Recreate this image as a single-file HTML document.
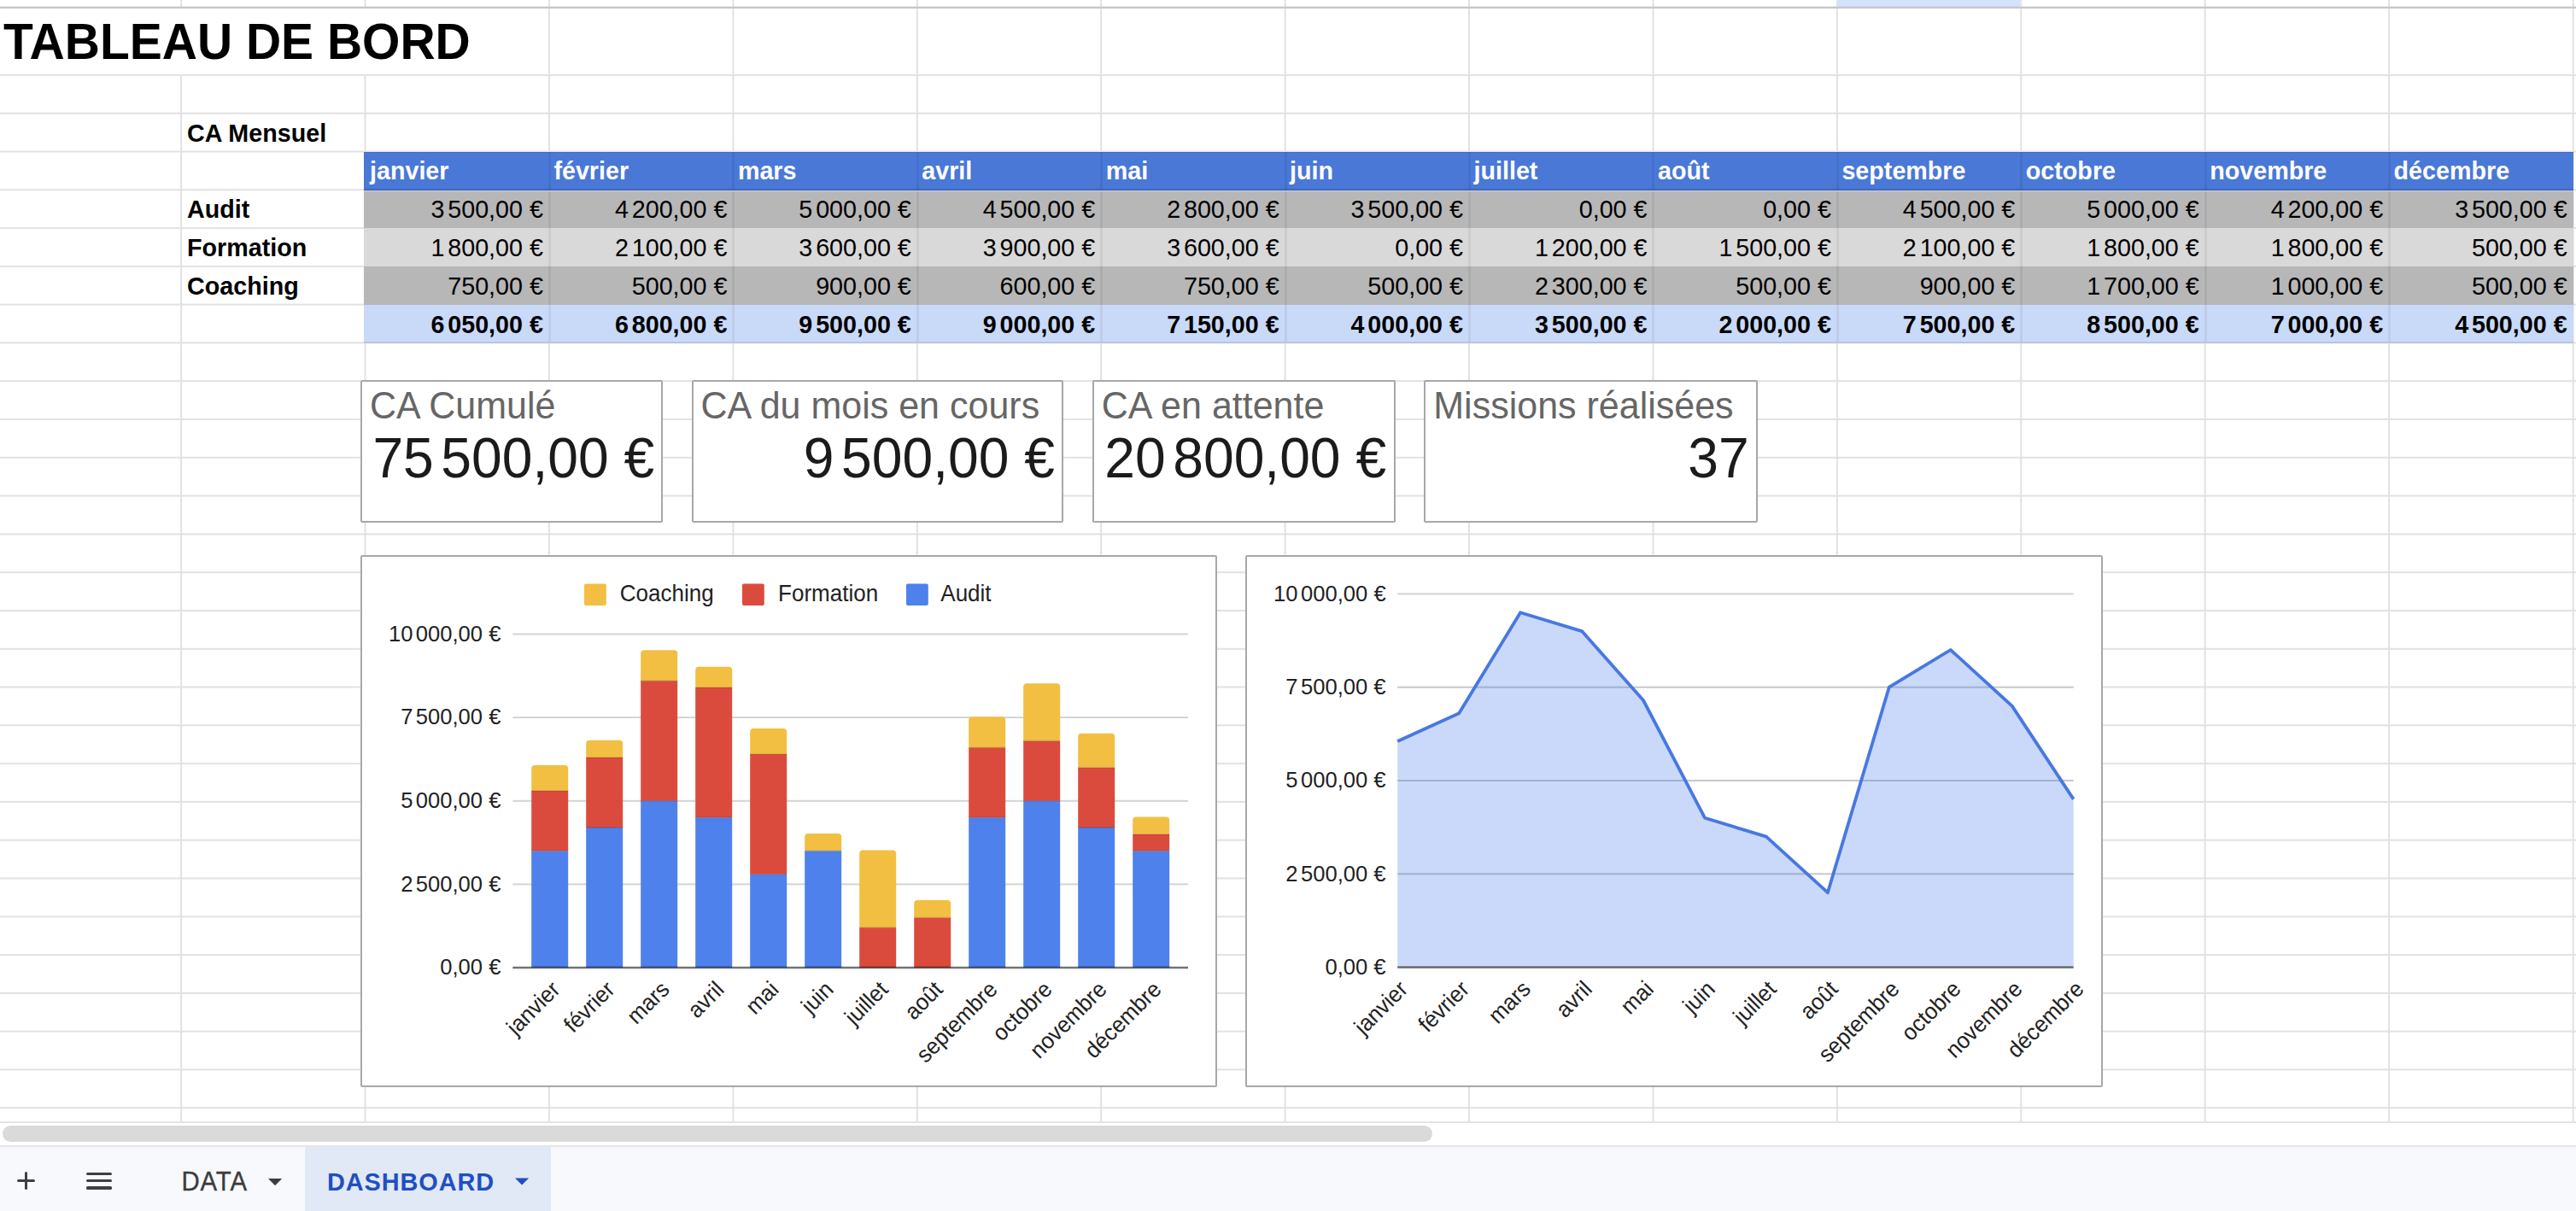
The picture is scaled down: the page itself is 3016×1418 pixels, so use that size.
<!DOCTYPE html>
<html><head><meta charset="utf-8">
<style>
html,body{margin:0;padding:0;}
body{width:3016px;height:1418px;overflow:hidden;background:#fff;position:relative;font-family:"Liberation Sans",sans-serif;}
.a{position:absolute;}
.t{position:absolute;white-space:nowrap;line-height:1;transform:scaleY(1.035);transform-origin:0 0.8465em;}
</style></head><body>

<svg class="a" style="left:0;top:0" width="3016" height="1316" viewBox="0 0 3016 1316">
<rect x="2151.9" y="0" width="213.4" height="8" fill="#d3e3fd"/>
<rect x="211.1" y="0" width="2" height="9" fill="#e2e2e2"/>
<rect x="211.1" y="87.9" width="2" height="1226.1" fill="#e2e2e2"/>
<rect x="426.5" y="0" width="2" height="9" fill="#e2e2e2"/>
<rect x="426.5" y="87.9" width="2" height="1226.1" fill="#e2e2e2"/>
<rect x="641.9" y="0" width="2" height="1314" fill="#e2e2e2"/>
<rect x="857.4" y="0" width="2" height="1314" fill="#e2e2e2"/>
<rect x="1072.8" y="0" width="2" height="1314" fill="#e2e2e2"/>
<rect x="1288.2" y="0" width="2" height="1314" fill="#e2e2e2"/>
<rect x="1503.6" y="0" width="2" height="1314" fill="#e2e2e2"/>
<rect x="1719.0" y="0" width="2" height="1314" fill="#e2e2e2"/>
<rect x="1934.5" y="0" width="2" height="1314" fill="#e2e2e2"/>
<rect x="2149.9" y="0" width="2" height="1314" fill="#e2e2e2"/>
<rect x="2365.3" y="0" width="2" height="1314" fill="#e2e2e2"/>
<rect x="2580.7" y="0" width="2" height="1314" fill="#e2e2e2"/>
<rect x="2796.1" y="0" width="2" height="1314" fill="#e2e2e2"/>
<rect x="3011.6" y="0" width="2" height="1314" fill="#e2e2e2"/>
<rect x="0" y="86.9" width="3016" height="2" fill="#e2e2e2"/>
<rect x="0" y="131.7" width="3016" height="2" fill="#e2e2e2"/>
<rect x="0" y="176.5" width="3016" height="2" fill="#e2e2e2"/>
<rect x="0" y="221.3" width="3016" height="2" fill="#e2e2e2"/>
<rect x="0" y="266.1" width="3016" height="2" fill="#e2e2e2"/>
<rect x="0" y="310.9" width="3016" height="2" fill="#e2e2e2"/>
<rect x="0" y="355.6" width="3016" height="2" fill="#e2e2e2"/>
<rect x="0" y="400.4" width="3016" height="2" fill="#e2e2e2"/>
<rect x="0" y="445.2" width="3016" height="2" fill="#e2e2e2"/>
<rect x="0" y="490.0" width="3016" height="2" fill="#e2e2e2"/>
<rect x="0" y="534.8" width="3016" height="2" fill="#e2e2e2"/>
<rect x="0" y="579.6" width="3016" height="2" fill="#e2e2e2"/>
<rect x="0" y="624.4" width="3016" height="2" fill="#e2e2e2"/>
<rect x="0" y="669.2" width="3016" height="2" fill="#e2e2e2"/>
<rect x="0" y="714.0" width="3016" height="2" fill="#e2e2e2"/>
<rect x="0" y="758.8" width="3016" height="2" fill="#e2e2e2"/>
<rect x="0" y="803.5" width="3016" height="2" fill="#e2e2e2"/>
<rect x="0" y="848.3" width="3016" height="2" fill="#e2e2e2"/>
<rect x="0" y="893.1" width="3016" height="2" fill="#e2e2e2"/>
<rect x="0" y="937.9" width="3016" height="2" fill="#e2e2e2"/>
<rect x="0" y="982.7" width="3016" height="2" fill="#e2e2e2"/>
<rect x="0" y="1027.5" width="3016" height="2" fill="#e2e2e2"/>
<rect x="0" y="1072.3" width="3016" height="2" fill="#e2e2e2"/>
<rect x="0" y="1117.1" width="3016" height="2" fill="#e2e2e2"/>
<rect x="0" y="1161.9" width="3016" height="2" fill="#e2e2e2"/>
<rect x="0" y="1206.7" width="3016" height="2" fill="#e2e2e2"/>
<rect x="0" y="1251.4" width="3016" height="2" fill="#e2e2e2"/>
<rect x="0" y="1296.2" width="3016" height="2" fill="#e2e2e2"/>
<rect x="0" y="7.6" width="3016" height="2.4" fill="#c7c9c9"/>
<rect x="0" y="1313.2" width="3016" height="2.2" fill="#e0e0e0"/>
</svg>
<div class="t" style="left:4px;top:21.1px;font-size:57px;font-weight:bold;color:#000">TABLEAU DE BORD</div>
<div class="t" style="left:219.0px;top:141.6px;font-size:28.7px;font-weight:bold;color:#000">CA Mensuel</div>
<div class="t" style="left:219.0px;top:231.2px;font-size:28.7px;font-weight:bold;color:#000">Audit</div>
<div class="t" style="left:219.0px;top:276.0px;font-size:28.7px;font-weight:bold;color:#000">Formation</div>
<div class="t" style="left:219.0px;top:320.7px;font-size:28.7px;font-weight:bold;color:#000">Coaching</div>
<div class="a" style="left:426px;top:178px;width:2587px;height:45px;background:#4a78d7"></div>
<div class="a" style="left:642px;top:178px;width:3px;height:45px;background:rgba(0,0,0,0.06)"></div>
<div class="a" style="left:857px;top:178px;width:3px;height:45px;background:rgba(0,0,0,0.06)"></div>
<div class="a" style="left:1073px;top:178px;width:3px;height:45px;background:rgba(0,0,0,0.06)"></div>
<div class="a" style="left:1288px;top:178px;width:3px;height:45px;background:rgba(0,0,0,0.06)"></div>
<div class="a" style="left:1504px;top:178px;width:3px;height:45px;background:rgba(0,0,0,0.06)"></div>
<div class="a" style="left:1719px;top:178px;width:3px;height:45px;background:rgba(0,0,0,0.06)"></div>
<div class="a" style="left:1934px;top:178px;width:3px;height:45px;background:rgba(0,0,0,0.06)"></div>
<div class="a" style="left:2150px;top:178px;width:3px;height:45px;background:rgba(0,0,0,0.06)"></div>
<div class="a" style="left:2365px;top:178px;width:3px;height:45px;background:rgba(0,0,0,0.06)"></div>
<div class="a" style="left:2581px;top:178px;width:3px;height:45px;background:rgba(0,0,0,0.06)"></div>
<div class="a" style="left:2796px;top:178px;width:3px;height:45px;background:rgba(0,0,0,0.06)"></div>
<div class="a" style="left:426px;top:225px;width:2587px;height:42px;background:#b7b7b7"></div>
<div class="a" style="left:642px;top:225px;width:3px;height:42px;background:rgba(0,0,0,0.06)"></div>
<div class="a" style="left:857px;top:225px;width:3px;height:42px;background:rgba(0,0,0,0.06)"></div>
<div class="a" style="left:1073px;top:225px;width:3px;height:42px;background:rgba(0,0,0,0.06)"></div>
<div class="a" style="left:1288px;top:225px;width:3px;height:42px;background:rgba(0,0,0,0.06)"></div>
<div class="a" style="left:1504px;top:225px;width:3px;height:42px;background:rgba(0,0,0,0.06)"></div>
<div class="a" style="left:1719px;top:225px;width:3px;height:42px;background:rgba(0,0,0,0.06)"></div>
<div class="a" style="left:1934px;top:225px;width:3px;height:42px;background:rgba(0,0,0,0.06)"></div>
<div class="a" style="left:2150px;top:225px;width:3px;height:42px;background:rgba(0,0,0,0.06)"></div>
<div class="a" style="left:2365px;top:225px;width:3px;height:42px;background:rgba(0,0,0,0.06)"></div>
<div class="a" style="left:2581px;top:225px;width:3px;height:42px;background:rgba(0,0,0,0.06)"></div>
<div class="a" style="left:2796px;top:225px;width:3px;height:42px;background:rgba(0,0,0,0.06)"></div>
<div class="a" style="left:426px;top:267px;width:2587px;height:45px;background:#d9d9d9"></div>
<div class="a" style="left:642px;top:267px;width:3px;height:45px;background:rgba(0,0,0,0.06)"></div>
<div class="a" style="left:857px;top:267px;width:3px;height:45px;background:rgba(0,0,0,0.06)"></div>
<div class="a" style="left:1073px;top:267px;width:3px;height:45px;background:rgba(0,0,0,0.06)"></div>
<div class="a" style="left:1288px;top:267px;width:3px;height:45px;background:rgba(0,0,0,0.06)"></div>
<div class="a" style="left:1504px;top:267px;width:3px;height:45px;background:rgba(0,0,0,0.06)"></div>
<div class="a" style="left:1719px;top:267px;width:3px;height:45px;background:rgba(0,0,0,0.06)"></div>
<div class="a" style="left:1934px;top:267px;width:3px;height:45px;background:rgba(0,0,0,0.06)"></div>
<div class="a" style="left:2150px;top:267px;width:3px;height:45px;background:rgba(0,0,0,0.06)"></div>
<div class="a" style="left:2365px;top:267px;width:3px;height:45px;background:rgba(0,0,0,0.06)"></div>
<div class="a" style="left:2581px;top:267px;width:3px;height:45px;background:rgba(0,0,0,0.06)"></div>
<div class="a" style="left:2796px;top:267px;width:3px;height:45px;background:rgba(0,0,0,0.06)"></div>
<div class="a" style="left:426px;top:312px;width:2587px;height:45px;background:#b7b7b7"></div>
<div class="a" style="left:642px;top:312px;width:3px;height:45px;background:rgba(0,0,0,0.06)"></div>
<div class="a" style="left:857px;top:312px;width:3px;height:45px;background:rgba(0,0,0,0.06)"></div>
<div class="a" style="left:1073px;top:312px;width:3px;height:45px;background:rgba(0,0,0,0.06)"></div>
<div class="a" style="left:1288px;top:312px;width:3px;height:45px;background:rgba(0,0,0,0.06)"></div>
<div class="a" style="left:1504px;top:312px;width:3px;height:45px;background:rgba(0,0,0,0.06)"></div>
<div class="a" style="left:1719px;top:312px;width:3px;height:45px;background:rgba(0,0,0,0.06)"></div>
<div class="a" style="left:1934px;top:312px;width:3px;height:45px;background:rgba(0,0,0,0.06)"></div>
<div class="a" style="left:2150px;top:312px;width:3px;height:45px;background:rgba(0,0,0,0.06)"></div>
<div class="a" style="left:2365px;top:312px;width:3px;height:45px;background:rgba(0,0,0,0.06)"></div>
<div class="a" style="left:2581px;top:312px;width:3px;height:45px;background:rgba(0,0,0,0.06)"></div>
<div class="a" style="left:2796px;top:312px;width:3px;height:45px;background:rgba(0,0,0,0.06)"></div>
<div class="a" style="left:426px;top:357px;width:2587px;height:43px;background:#c9daf8"></div>
<div class="a" style="left:642px;top:357px;width:3px;height:43px;background:rgba(0,0,0,0.06)"></div>
<div class="a" style="left:857px;top:357px;width:3px;height:43px;background:rgba(0,0,0,0.06)"></div>
<div class="a" style="left:1073px;top:357px;width:3px;height:43px;background:rgba(0,0,0,0.06)"></div>
<div class="a" style="left:1288px;top:357px;width:3px;height:43px;background:rgba(0,0,0,0.06)"></div>
<div class="a" style="left:1504px;top:357px;width:3px;height:43px;background:rgba(0,0,0,0.06)"></div>
<div class="a" style="left:1719px;top:357px;width:3px;height:43px;background:rgba(0,0,0,0.06)"></div>
<div class="a" style="left:1934px;top:357px;width:3px;height:43px;background:rgba(0,0,0,0.06)"></div>
<div class="a" style="left:2150px;top:357px;width:3px;height:43px;background:rgba(0,0,0,0.06)"></div>
<div class="a" style="left:2365px;top:357px;width:3px;height:43px;background:rgba(0,0,0,0.06)"></div>
<div class="a" style="left:2581px;top:357px;width:3px;height:43px;background:rgba(0,0,0,0.06)"></div>
<div class="a" style="left:2796px;top:357px;width:3px;height:43px;background:rgba(0,0,0,0.06)"></div>
<div class="a" style="left:426px;top:178px;width:2587px;height:1px;background:rgba(0,0,0,0.10)"></div>
<div class="a" style="left:426px;top:221px;width:2587px;height:2px;background:rgba(0,0,0,0.12)"></div>
<div class="a" style="left:426px;top:223px;width:2587px;height:2px;background:#bdc1cb"></div>
<div class="a" style="left:426px;top:400px;width:2587px;height:2px;background:#b8c6e3"></div>
<div class="t" style="left:433.0px;top:186.4px;font-size:28.7px;font-weight:bold;color:#fff">janvier</div>
<div class="t" style="left:648.4px;top:186.4px;font-size:28.7px;font-weight:bold;color:#fff">février</div>
<div class="t" style="left:863.9px;top:186.4px;font-size:28.7px;font-weight:bold;color:#fff">mars</div>
<div class="t" style="left:1079.3px;top:186.4px;font-size:28.7px;font-weight:bold;color:#fff">avril</div>
<div class="t" style="left:1294.7px;top:186.4px;font-size:28.7px;font-weight:bold;color:#fff">mai</div>
<div class="t" style="left:1510.1px;top:186.4px;font-size:28.7px;font-weight:bold;color:#fff">juin</div>
<div class="t" style="left:1725.5px;top:186.4px;font-size:28.7px;font-weight:bold;color:#fff">juillet</div>
<div class="t" style="left:1941.0px;top:186.4px;font-size:28.7px;font-weight:bold;color:#fff">août</div>
<div class="t" style="left:2156.4px;top:186.4px;font-size:28.7px;font-weight:bold;color:#fff">septembre</div>
<div class="t" style="left:2371.8px;top:186.4px;font-size:28.7px;font-weight:bold;color:#fff">octobre</div>
<div class="t" style="left:2587.2px;top:186.4px;font-size:28.7px;font-weight:bold;color:#fff">novembre</div>
<div class="t" style="left:2802.6px;top:186.4px;font-size:28.7px;font-weight:bold;color:#fff">décembre</div>
<div class="t" style="right:2380.1px;top:231.2px;font-size:28.7px;font-weight:normal;color:#000">3<span style="display:inline-block;width:0.133em"></span>500,00 €</div>
<div class="t" style="right:2164.6px;top:231.2px;font-size:28.7px;font-weight:normal;color:#000">4<span style="display:inline-block;width:0.133em"></span>200,00 €</div>
<div class="t" style="right:1949.2px;top:231.2px;font-size:28.7px;font-weight:normal;color:#000">5<span style="display:inline-block;width:0.133em"></span>000,00 €</div>
<div class="t" style="right:1733.8px;top:231.2px;font-size:28.7px;font-weight:normal;color:#000">4<span style="display:inline-block;width:0.133em"></span>500,00 €</div>
<div class="t" style="right:1518.4px;top:231.2px;font-size:28.7px;font-weight:normal;color:#000">2<span style="display:inline-block;width:0.133em"></span>800,00 €</div>
<div class="t" style="right:1303.0px;top:231.2px;font-size:28.7px;font-weight:normal;color:#000">3<span style="display:inline-block;width:0.133em"></span>500,00 €</div>
<div class="t" style="right:1087.5px;top:231.2px;font-size:28.7px;font-weight:normal;color:#000">0,00 €</div>
<div class="t" style="right:872.1px;top:231.2px;font-size:28.7px;font-weight:normal;color:#000">0,00 €</div>
<div class="t" style="right:656.7px;top:231.2px;font-size:28.7px;font-weight:normal;color:#000">4<span style="display:inline-block;width:0.133em"></span>500,00 €</div>
<div class="t" style="right:441.3px;top:231.2px;font-size:28.7px;font-weight:normal;color:#000">5<span style="display:inline-block;width:0.133em"></span>000,00 €</div>
<div class="t" style="right:225.9px;top:231.2px;font-size:28.7px;font-weight:normal;color:#000">4<span style="display:inline-block;width:0.133em"></span>200,00 €</div>
<div class="t" style="right:10.4px;top:231.2px;font-size:28.7px;font-weight:normal;color:#000">3<span style="display:inline-block;width:0.133em"></span>500,00 €</div>
<div class="t" style="right:2380.1px;top:276.0px;font-size:28.7px;font-weight:normal;color:#000">1<span style="display:inline-block;width:0.133em"></span>800,00 €</div>
<div class="t" style="right:2164.6px;top:276.0px;font-size:28.7px;font-weight:normal;color:#000">2<span style="display:inline-block;width:0.133em"></span>100,00 €</div>
<div class="t" style="right:1949.2px;top:276.0px;font-size:28.7px;font-weight:normal;color:#000">3<span style="display:inline-block;width:0.133em"></span>600,00 €</div>
<div class="t" style="right:1733.8px;top:276.0px;font-size:28.7px;font-weight:normal;color:#000">3<span style="display:inline-block;width:0.133em"></span>900,00 €</div>
<div class="t" style="right:1518.4px;top:276.0px;font-size:28.7px;font-weight:normal;color:#000">3<span style="display:inline-block;width:0.133em"></span>600,00 €</div>
<div class="t" style="right:1303.0px;top:276.0px;font-size:28.7px;font-weight:normal;color:#000">0,00 €</div>
<div class="t" style="right:1087.5px;top:276.0px;font-size:28.7px;font-weight:normal;color:#000">1<span style="display:inline-block;width:0.133em"></span>200,00 €</div>
<div class="t" style="right:872.1px;top:276.0px;font-size:28.7px;font-weight:normal;color:#000">1<span style="display:inline-block;width:0.133em"></span>500,00 €</div>
<div class="t" style="right:656.7px;top:276.0px;font-size:28.7px;font-weight:normal;color:#000">2<span style="display:inline-block;width:0.133em"></span>100,00 €</div>
<div class="t" style="right:441.3px;top:276.0px;font-size:28.7px;font-weight:normal;color:#000">1<span style="display:inline-block;width:0.133em"></span>800,00 €</div>
<div class="t" style="right:225.9px;top:276.0px;font-size:28.7px;font-weight:normal;color:#000">1<span style="display:inline-block;width:0.133em"></span>800,00 €</div>
<div class="t" style="right:10.4px;top:276.0px;font-size:28.7px;font-weight:normal;color:#000">500,00 €</div>
<div class="t" style="right:2380.1px;top:320.7px;font-size:28.7px;font-weight:normal;color:#000">750,00 €</div>
<div class="t" style="right:2164.6px;top:320.7px;font-size:28.7px;font-weight:normal;color:#000">500,00 €</div>
<div class="t" style="right:1949.2px;top:320.7px;font-size:28.7px;font-weight:normal;color:#000">900,00 €</div>
<div class="t" style="right:1733.8px;top:320.7px;font-size:28.7px;font-weight:normal;color:#000">600,00 €</div>
<div class="t" style="right:1518.4px;top:320.7px;font-size:28.7px;font-weight:normal;color:#000">750,00 €</div>
<div class="t" style="right:1303.0px;top:320.7px;font-size:28.7px;font-weight:normal;color:#000">500,00 €</div>
<div class="t" style="right:1087.5px;top:320.7px;font-size:28.7px;font-weight:normal;color:#000">2<span style="display:inline-block;width:0.133em"></span>300,00 €</div>
<div class="t" style="right:872.1px;top:320.7px;font-size:28.7px;font-weight:normal;color:#000">500,00 €</div>
<div class="t" style="right:656.7px;top:320.7px;font-size:28.7px;font-weight:normal;color:#000">900,00 €</div>
<div class="t" style="right:441.3px;top:320.7px;font-size:28.7px;font-weight:normal;color:#000">1<span style="display:inline-block;width:0.133em"></span>700,00 €</div>
<div class="t" style="right:225.9px;top:320.7px;font-size:28.7px;font-weight:normal;color:#000">1<span style="display:inline-block;width:0.133em"></span>000,00 €</div>
<div class="t" style="right:10.4px;top:320.7px;font-size:28.7px;font-weight:normal;color:#000">500,00 €</div>
<div class="t" style="right:2380.1px;top:365.5px;font-size:28.7px;font-weight:bold;color:#000">6<span style="display:inline-block;width:0.133em"></span>050,00 €</div>
<div class="t" style="right:2164.6px;top:365.5px;font-size:28.7px;font-weight:bold;color:#000">6<span style="display:inline-block;width:0.133em"></span>800,00 €</div>
<div class="t" style="right:1949.2px;top:365.5px;font-size:28.7px;font-weight:bold;color:#000">9<span style="display:inline-block;width:0.133em"></span>500,00 €</div>
<div class="t" style="right:1733.8px;top:365.5px;font-size:28.7px;font-weight:bold;color:#000">9<span style="display:inline-block;width:0.133em"></span>000,00 €</div>
<div class="t" style="right:1518.4px;top:365.5px;font-size:28.7px;font-weight:bold;color:#000">7<span style="display:inline-block;width:0.133em"></span>150,00 €</div>
<div class="t" style="right:1303.0px;top:365.5px;font-size:28.7px;font-weight:bold;color:#000">4<span style="display:inline-block;width:0.133em"></span>000,00 €</div>
<div class="t" style="right:1087.5px;top:365.5px;font-size:28.7px;font-weight:bold;color:#000">3<span style="display:inline-block;width:0.133em"></span>500,00 €</div>
<div class="t" style="right:872.1px;top:365.5px;font-size:28.7px;font-weight:bold;color:#000">2<span style="display:inline-block;width:0.133em"></span>000,00 €</div>
<div class="t" style="right:656.7px;top:365.5px;font-size:28.7px;font-weight:bold;color:#000">7<span style="display:inline-block;width:0.133em"></span>500,00 €</div>
<div class="t" style="right:441.3px;top:365.5px;font-size:28.7px;font-weight:bold;color:#000">8<span style="display:inline-block;width:0.133em"></span>500,00 €</div>
<div class="t" style="right:225.9px;top:365.5px;font-size:28.7px;font-weight:bold;color:#000">7<span style="display:inline-block;width:0.133em"></span>000,00 €</div>
<div class="t" style="right:10.4px;top:365.5px;font-size:28.7px;font-weight:bold;color:#000">4<span style="display:inline-block;width:0.133em"></span>500,00 €</div>
<div class="a" style="box-sizing:border-box;left:422.05px;top:445.15px;width:353.80px;height:166.60px;border:2.7px solid #a8a8a8;border-radius:2px;background:#fff"></div>
<div class="t" style="left:432.9px;top:453.6px;font-size:43px;color:#666">CA Cumulé</div>
<div class="t" style="left:436.4px;top:505.1px;font-size:64.2px;color:#1b1b1b">75<span style="display:inline-block;width:0.133em"></span>500,00 €</div>
<div class="a" style="box-sizing:border-box;left:809.55px;top:445.15px;width:435.50px;height:166.60px;border:2.7px solid #a8a8a8;border-radius:2px;background:#fff"></div>
<div class="t" style="left:820.4px;top:453.6px;font-size:43px;color:#666">CA du mois en cours</div>
<div class="t" style="right:1781.1px;top:505.1px;font-size:64.2px;color:#1b1b1b">9<span style="display:inline-block;width:0.133em"></span>500,00 €</div>
<div class="a" style="box-sizing:border-box;left:1278.95px;top:445.15px;width:354.80px;height:166.60px;border:2.7px solid #a8a8a8;border-radius:2px;background:#fff"></div>
<div class="t" style="left:1289.8px;top:453.6px;font-size:43px;color:#666">CA en attente</div>
<div class="t" style="left:1293.3px;top:505.1px;font-size:64.2px;color:#1b1b1b">20<span style="display:inline-block;width:0.133em"></span>800,00 €</div>
<div class="a" style="box-sizing:border-box;left:1667.45px;top:445.15px;width:390.30px;height:166.60px;border:2.7px solid #a8a8a8;border-radius:2px;background:#fff"></div>
<div class="t" style="left:1678.3px;top:453.6px;font-size:43px;color:#666">Missions réalisées</div>
<div class="t" style="right:968.4px;top:505.1px;font-size:64.2px;color:#1b1b1b">37</div>
<div class="a" style="box-sizing:border-box;left:421.55px;top:650.05px;width:1003.10px;height:623.30px;border:2.7px solid #a8a8a8;border-radius:2px;background:#fff"></div>
<div class="a" style="box-sizing:border-box;left:1458.25px;top:650.05px;width:1003.50px;height:623.30px;border:2.7px solid #a8a8a8;border-radius:2px;background:#fff"></div>
<svg class="a" style="left:0;top:0" width="3016" height="1418" viewBox="0 0 3016 1418" font-family="Liberation Sans, sans-serif">
<rect x="600.3" y="1034.4" width="790.7" height="2" fill="#d4d4d4"/>
<text transform="translate(586.4,1043.6) scale(1,1.04)" font-size="25.6" text-anchor="end" fill="#222">2<tspan dx="3.40">500,00</tspan> €</text>
<rect x="600.3" y="936.8" width="790.7" height="2" fill="#d4d4d4"/>
<text transform="translate(586.4,946.0) scale(1,1.04)" font-size="25.6" text-anchor="end" fill="#222">5<tspan dx="3.40">000,00</tspan> €</text>
<rect x="600.3" y="839.1" width="790.7" height="2" fill="#d4d4d4"/>
<text transform="translate(586.4,848.3) scale(1,1.04)" font-size="25.6" text-anchor="end" fill="#222">7<tspan dx="3.40">500,00</tspan> €</text>
<rect x="600.3" y="741.5" width="790.7" height="2" fill="#d4d4d4"/>
<text transform="translate(586.4,750.7) scale(1,1.04)" font-size="25.6" text-anchor="end" fill="#222">10<tspan dx="3.40">000,00</tspan> €</text>
<text transform="translate(586.4,1141.2) scale(1,1.04)" font-size="25.6" text-anchor="end" fill="#222">0,00 €</text>
<rect x="622.2" y="996.33" width="43.0" height="136.67" fill="#4f81ec"/>
<rect x="622.2" y="926.03" width="43.0" height="70.29" fill="#db4b3d"/>
<path d="M622.2,926.03 V899.95 Q622.2,895.95 626.2,895.95 H661.2 Q665.2,895.95 665.2,899.95 V926.03 Z" fill="#f2bf42"/>
<rect x="622.2" y="995.53" width="43.0" height="1.6" fill="#000" fill-opacity="0.12"/>
<rect x="622.2" y="925.24" width="43.0" height="1.6" fill="#000" fill-opacity="0.12"/>
<text transform="translate(657.2,1160.2) rotate(-45) scale(1,1.04)" font-size="25.6" text-anchor="end" fill="#222">janvier</text>
<rect x="686.2" y="968.99" width="43.0" height="164.01" fill="#4f81ec"/>
<rect x="686.2" y="886.99" width="43.0" height="82.00" fill="#db4b3d"/>
<path d="M686.2,886.99 V870.66 Q686.2,866.66 690.2,866.66 H725.2 Q729.2,866.66 729.2,870.66 V886.99 Z" fill="#f2bf42"/>
<rect x="686.2" y="968.19" width="43.0" height="1.6" fill="#000" fill-opacity="0.12"/>
<rect x="686.2" y="886.19" width="43.0" height="1.6" fill="#000" fill-opacity="0.12"/>
<text transform="translate(721.2,1160.2) rotate(-45) scale(1,1.04)" font-size="25.6" text-anchor="end" fill="#222">février</text>
<rect x="750.2" y="937.75" width="43.0" height="195.25" fill="#4f81ec"/>
<rect x="750.2" y="797.17" width="43.0" height="140.58" fill="#db4b3d"/>
<path d="M750.2,797.17 V765.23 Q750.2,761.23 754.2,761.23 H789.2 Q793.2,761.23 793.2,765.23 V797.17 Z" fill="#f2bf42"/>
<rect x="750.2" y="936.95" width="43.0" height="1.6" fill="#000" fill-opacity="0.12"/>
<rect x="750.2" y="796.37" width="43.0" height="1.6" fill="#000" fill-opacity="0.12"/>
<text transform="translate(785.2,1160.2) rotate(-45) scale(1,1.04)" font-size="25.6" text-anchor="end" fill="#222">mars</text>
<rect x="814.2" y="957.27" width="43.0" height="175.73" fill="#4f81ec"/>
<rect x="814.2" y="804.98" width="43.0" height="152.29" fill="#db4b3d"/>
<path d="M814.2,804.98 V784.75 Q814.2,780.75 818.2,780.75 H853.2 Q857.2,780.75 857.2,784.75 V804.98 Z" fill="#f2bf42"/>
<rect x="814.2" y="956.48" width="43.0" height="1.6" fill="#000" fill-opacity="0.12"/>
<rect x="814.2" y="804.18" width="43.0" height="1.6" fill="#000" fill-opacity="0.12"/>
<text transform="translate(849.2,1160.2) rotate(-45) scale(1,1.04)" font-size="25.6" text-anchor="end" fill="#222">avril</text>
<rect x="878.2" y="1023.66" width="43.0" height="109.34" fill="#4f81ec"/>
<rect x="878.2" y="883.08" width="43.0" height="140.58" fill="#db4b3d"/>
<path d="M878.2,883.08 V856.99 Q878.2,852.99 882.2,852.99 H917.2 Q921.2,852.99 921.2,856.99 V883.08 Z" fill="#f2bf42"/>
<rect x="878.2" y="1022.86" width="43.0" height="1.6" fill="#000" fill-opacity="0.12"/>
<rect x="878.2" y="882.28" width="43.0" height="1.6" fill="#000" fill-opacity="0.12"/>
<text transform="translate(913.2,1160.2) rotate(-45) scale(1,1.04)" font-size="25.6" text-anchor="end" fill="#222">mai</text>
<rect x="942.2" y="996.33" width="43.0" height="136.67" fill="#4f81ec"/>
<path d="M942.2,996.33 V980.00 Q942.2,976.00 946.2,976.00 H981.2 Q985.2,976.00 985.2,980.00 V996.33 Z" fill="#f2bf42"/>
<rect x="942.2" y="995.53" width="43.0" height="1.6" fill="#000" fill-opacity="0.12"/>
<text transform="translate(977.2,1160.2) rotate(-45) scale(1,1.04)" font-size="25.6" text-anchor="end" fill="#222">juin</text>
<rect x="1006.2" y="1086.14" width="43.0" height="46.86" fill="#db4b3d"/>
<path d="M1006.2,1086.14 V999.53 Q1006.2,995.53 1010.2,995.53 H1045.2 Q1049.2,995.53 1049.2,999.53 V1086.14 Z" fill="#f2bf42"/>
<rect x="1006.2" y="1085.34" width="43.0" height="1.6" fill="#000" fill-opacity="0.12"/>
<text transform="translate(1041.2,1160.2) rotate(-45) scale(1,1.04)" font-size="25.6" text-anchor="end" fill="#222">juillet</text>
<rect x="1070.2" y="1074.42" width="43.0" height="58.58" fill="#db4b3d"/>
<path d="M1070.2,1074.42 V1058.10 Q1070.2,1054.10 1074.2,1054.10 H1109.2 Q1113.2,1054.10 1113.2,1058.10 V1074.42 Z" fill="#f2bf42"/>
<rect x="1070.2" y="1073.62" width="43.0" height="1.6" fill="#000" fill-opacity="0.12"/>
<text transform="translate(1105.2,1160.2) rotate(-45) scale(1,1.04)" font-size="25.6" text-anchor="end" fill="#222">août</text>
<rect x="1134.2" y="957.27" width="43.0" height="175.73" fill="#4f81ec"/>
<rect x="1134.2" y="875.27" width="43.0" height="82.00" fill="#db4b3d"/>
<path d="M1134.2,875.27 V843.33 Q1134.2,839.33 1138.2,839.33 H1173.2 Q1177.2,839.33 1177.2,843.33 V875.27 Z" fill="#f2bf42"/>
<rect x="1134.2" y="956.48" width="43.0" height="1.6" fill="#000" fill-opacity="0.12"/>
<rect x="1134.2" y="874.47" width="43.0" height="1.6" fill="#000" fill-opacity="0.12"/>
<text transform="translate(1169.2,1160.2) rotate(-45) scale(1,1.04)" font-size="25.6" text-anchor="end" fill="#222">septembre</text>
<rect x="1198.2" y="937.75" width="43.0" height="195.25" fill="#4f81ec"/>
<rect x="1198.2" y="867.46" width="43.0" height="70.29" fill="#db4b3d"/>
<path d="M1198.2,867.46 V804.28 Q1198.2,800.28 1202.2,800.28 H1237.2 Q1241.2,800.28 1241.2,804.28 V867.46 Z" fill="#f2bf42"/>
<rect x="1198.2" y="936.95" width="43.0" height="1.6" fill="#000" fill-opacity="0.12"/>
<rect x="1198.2" y="866.66" width="43.0" height="1.6" fill="#000" fill-opacity="0.12"/>
<text transform="translate(1233.2,1160.2) rotate(-45) scale(1,1.04)" font-size="25.6" text-anchor="end" fill="#222">octobre</text>
<rect x="1262.2" y="968.99" width="43.0" height="164.01" fill="#4f81ec"/>
<rect x="1262.2" y="898.70" width="43.0" height="70.29" fill="#db4b3d"/>
<path d="M1262.2,898.70 V862.85 Q1262.2,858.85 1266.2,858.85 H1301.2 Q1305.2,858.85 1305.2,862.85 V898.70 Z" fill="#f2bf42"/>
<rect x="1262.2" y="968.19" width="43.0" height="1.6" fill="#000" fill-opacity="0.12"/>
<rect x="1262.2" y="897.90" width="43.0" height="1.6" fill="#000" fill-opacity="0.12"/>
<text transform="translate(1297.2,1160.2) rotate(-45) scale(1,1.04)" font-size="25.6" text-anchor="end" fill="#222">novembre</text>
<rect x="1326.2" y="996.33" width="43.0" height="136.67" fill="#4f81ec"/>
<rect x="1326.2" y="976.80" width="43.0" height="19.53" fill="#db4b3d"/>
<path d="M1326.2,976.80 V960.48 Q1326.2,956.48 1330.2,956.48 H1365.2 Q1369.2,956.48 1369.2,960.48 V976.80 Z" fill="#f2bf42"/>
<rect x="1326.2" y="995.53" width="43.0" height="1.6" fill="#000" fill-opacity="0.12"/>
<rect x="1326.2" y="976.00" width="43.0" height="1.6" fill="#000" fill-opacity="0.12"/>
<text transform="translate(1361.2,1160.2) rotate(-45) scale(1,1.04)" font-size="25.6" text-anchor="end" fill="#222">décembre</text>
<rect x="600.3" y="1131.8" width="790.7" height="2.5" fill="#000" fill-opacity="0.55"/>
<rect x="684" y="683.6" width="25.8" height="25.4" rx="2" fill="#f2bf42"/>
<text transform="translate(725.8,704) scale(1,1.04)" font-size="26" fill="#222">Coaching</text>
<rect x="869" y="683.6" width="25.8" height="25.4" rx="2" fill="#db4b3d"/>
<text transform="translate(911.1,704) scale(1,1.04)" font-size="26" fill="#222">Formation</text>
<rect x="1061" y="683.6" width="25.8" height="25.4" rx="2" fill="#4f81ec"/>
<text transform="translate(1101.3,704) scale(1,1.04)" font-size="26" fill="#222">Audit</text>
<rect x="1636.2" y="1022.3" width="791.5" height="2" fill="#d4d4d4"/>
<text transform="translate(1622.6,1031.5) scale(1,1.04)" font-size="25.6" text-anchor="end" fill="#222">2<tspan dx="3.40">500,00</tspan> €</text>
<rect x="1636.2" y="913.0" width="791.5" height="2" fill="#d4d4d4"/>
<text transform="translate(1622.6,922.2) scale(1,1.04)" font-size="25.6" text-anchor="end" fill="#222">5<tspan dx="3.40">000,00</tspan> €</text>
<rect x="1636.2" y="803.7" width="791.5" height="2" fill="#d4d4d4"/>
<text transform="translate(1622.6,812.9) scale(1,1.04)" font-size="25.6" text-anchor="end" fill="#222">7<tspan dx="3.40">500,00</tspan> €</text>
<rect x="1636.2" y="694.4" width="791.5" height="2" fill="#d4d4d4"/>
<text transform="translate(1622.6,703.6) scale(1,1.04)" font-size="25.6" text-anchor="end" fill="#222">10<tspan dx="3.40">000,00</tspan> €</text>
<text transform="translate(1622.6,1140.8) scale(1,1.04)" font-size="25.6" text-anchor="end" fill="#222">0,00 €</text>
<polygon points="1636.2,1132.6 1636.2,868.1 1708.2,835.3 1780.1,717.3 1852.1,739.1 1924.0,820.0 1996.0,957.7 2067.9,979.6 2139.9,1045.2 2211.8,804.7 2283.8,761.0 2355.7,826.6 2427.7,935.9 2427.7,1132.6" fill="#4f81ec" fill-opacity="0.3"/>
<rect x="1636.2" y="1022.3" width="791.5" height="2" fill="#000" fill-opacity="0.06"/>
<rect x="1636.2" y="913.0" width="791.5" height="2" fill="#000" fill-opacity="0.06"/>
<rect x="1636.2" y="803.7" width="791.5" height="2" fill="#000" fill-opacity="0.06"/>
<polyline points="1636.2,868.1 1708.2,835.3 1780.1,717.3 1852.1,739.1 1924.0,820.0 1996.0,957.7 2067.9,979.6 2139.9,1045.2 2211.8,804.7 2283.8,761.0 2355.7,826.6 2427.7,935.9" fill="none" stroke="#4878e0" stroke-width="3.8" stroke-linejoin="round"/>
<rect x="1636.2" y="1131.4" width="791.5" height="2.5" fill="#000" fill-opacity="0.55"/>
<text transform="translate(1649.7,1159.8) rotate(-45) scale(1,1.04)" font-size="25.6" text-anchor="end" fill="#222">janvier</text>
<text transform="translate(1721.7,1159.8) rotate(-45) scale(1,1.04)" font-size="25.6" text-anchor="end" fill="#222">février</text>
<text transform="translate(1793.6,1159.8) rotate(-45) scale(1,1.04)" font-size="25.6" text-anchor="end" fill="#222">mars</text>
<text transform="translate(1865.6,1159.8) rotate(-45) scale(1,1.04)" font-size="25.6" text-anchor="end" fill="#222">avril</text>
<text transform="translate(1937.5,1159.8) rotate(-45) scale(1,1.04)" font-size="25.6" text-anchor="end" fill="#222">mai</text>
<text transform="translate(2009.5,1159.8) rotate(-45) scale(1,1.04)" font-size="25.6" text-anchor="end" fill="#222">juin</text>
<text transform="translate(2081.4,1159.8) rotate(-45) scale(1,1.04)" font-size="25.6" text-anchor="end" fill="#222">juillet</text>
<text transform="translate(2153.4,1159.8) rotate(-45) scale(1,1.04)" font-size="25.6" text-anchor="end" fill="#222">août</text>
<text transform="translate(2225.3,1159.8) rotate(-45) scale(1,1.04)" font-size="25.6" text-anchor="end" fill="#222">septembre</text>
<text transform="translate(2297.3,1159.8) rotate(-45) scale(1,1.04)" font-size="25.6" text-anchor="end" fill="#222">octobre</text>
<text transform="translate(2369.2,1159.8) rotate(-45) scale(1,1.04)" font-size="25.6" text-anchor="end" fill="#222">novembre</text>
<text transform="translate(2441.2,1159.8) rotate(-45) scale(1,1.04)" font-size="25.6" text-anchor="end" fill="#222">décembre</text>
</svg>
<div class="a" style="left:0;top:1315.4px;width:3016px;height:25.2px;background:#fff"></div>
<div class="a" style="left:2.5px;top:1318.2px;width:1674px;height:19px;border-radius:9.5px;background:#dadada"></div>
<div class="a" style="left:0;top:1340.6px;width:3016px;height:2px;background:#e6e6e6"></div>
<div class="a" style="left:0;top:1342.6px;width:3016px;height:75.4px;background:#f8f9fc"></div>
<div class="a" style="left:356.8px;top:1342.6px;width:288.5px;height:75.4px;background:#e1e8f6"></div>
<div class="a" style="left:20px;top:1381.2px;width:21.3px;height:3.2px;border-radius:1.6px;background:#3d4043"></div>
<div class="a" style="left:29.05px;top:1372.2px;width:3.2px;height:21px;border-radius:1.6px;background:#3d4043"></div>
<div class="a" style="left:101.3px;top:1373.3px;width:29.6px;height:3.2px;border-radius:1.6px;background:#3d4043"></div>
<div class="a" style="left:101.3px;top:1381.2px;width:29.6px;height:3.2px;border-radius:1.6px;background:#3d4043"></div>
<div class="a" style="left:101.3px;top:1389.4px;width:29.6px;height:3.2px;border-radius:1.6px;background:#3d4043"></div>
<div class="t" style="left:212.5px;top:1369.4px;font-size:29.4px;color:#3c3c3c;letter-spacing:0.85px;-webkit-text-stroke:0.35px #3c3c3c">DATA</div>
<svg class="a" style="left:314.4px;top:1379.7px" width="16.2" height="8.3" viewBox="0 0 16 8"><path d="M0 0H16L8 8Z" fill="#3c3c3c"/></svg>
<div class="t" style="left:383px;top:1370.1px;font-size:28.9px;font-weight:bold;color:#1f4fc2;letter-spacing:0.92px">DASHBOARD</div>
<svg class="a" style="left:603.4px;top:1379.2px" width="16.2" height="9" viewBox="0 0 16 8"><path d="M0 0H16L8 8Z" fill="#1f4fc2"/></svg>
</body></html>
